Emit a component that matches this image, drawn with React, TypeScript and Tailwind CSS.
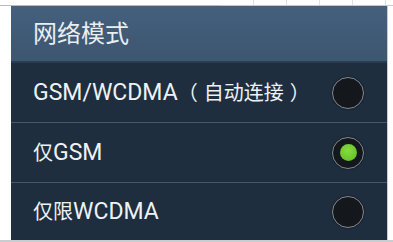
import React from "react";

const font = { fontFamily: "Roboto, 'Noto Sans CJK SC', sans-serif" };

function Radio({ on }: { on?: boolean }) {
  return (
    <div className="w-[32px] h-[32px] rounded-full border-[1.5px] border-[#858b91] bg-[#14171c] flex items-center justify-center shadow-[0_0_2px_rgba(0,0,0,0.6)]">
      {on && <div className="w-[17px] h-[17px] rounded-full bg-[radial-gradient(circle_at_45%_40%,#86dd3e,#5cb824)]" />}
    </div>
  );
}

function Row({ children, on, last }: { children: React.ReactNode; on?: boolean; last?: boolean }) {
  return (
    <div className={`flex items-center justify-between pl-[22px] pr-[23px] ${last ? "h-[57px]" : "h-[60px] border-b border-[#46586a]"}`}>
      <span className="text-[23px] text-[#eef2f5] leading-none flex items-baseline">{children}</span>
      <Radio on={on} />
    </div>
  );
}

const Cjk = ({ children, className = "" }: { children: React.ReactNode; className?: string }) => (
  <span className={`text-[20px] ${className}`}>{children}</span>
);

export default function App() {
  return (
    <div className="w-[393px] h-[242px] bg-white overflow-hidden flex flex-col" style={font}>
      <div className="h-[6px] flex shrink-0">
        <div className="w-[221px] border-b border-[#b8bcc0] mt-[4px]" />
        <div className="flex-1 flex border-b border-[#c4c8cb]">
          <div className="w-[33px] border-r border-[#dfe2e4]" />
          <div className="w-[33px] border-r border-[#dfe2e4]" />
          <div className="w-[33px] border-r border-[#dfe2e4]" />
          <div className="w-[33px] border-r border-[#dfe2e4]" />
          <div className="w-[33px] border-r border-[#dfe2e4]" />
        </div>
      </div>
      <div className="flex flex-1">
        <div className="w-[11px] bg-white" />
        <div className="w-[376px] flex flex-col bg-[#1e2e3e]">
          <div className="h-[57px] flex items-center pl-[22px] bg-[linear-gradient(180deg,#44607c,#3d5672)] border-b-2 border-[#2a3c4e]">
            <span className="text-[24px] text-[#e9eef2] leading-none">网络模式</span>
          </div>
          <Row>
            GSM/WCDMA<Cjk className="mr-[6px]">（</Cjk><Cjk>自动连接</Cjk><Cjk className="ml-[6px]">）</Cjk>
          </Row>
          <Row on>
            <Cjk>仅</Cjk>GSM
          </Row>
          <Row last>
            <Cjk>仅限</Cjk>WCDMA
          </Row>
        </div>
        <div className="flex-1 bg-white border-l border-[#c8ccd0]" />
      </div>
      <div className="h-[3px] bg-[#c9cdd0] shrink-0" />
    </div>
  );
}
